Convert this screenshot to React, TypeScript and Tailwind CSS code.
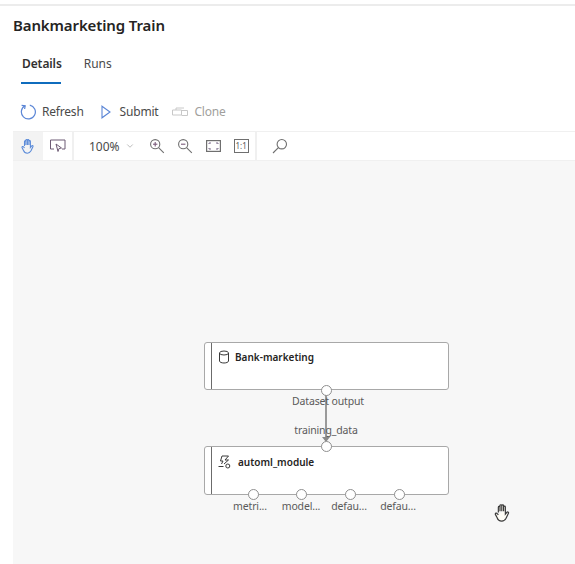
import { ChevronDown } from "lucide-react";

const font = { fontFamily: '"Noto Sans", sans-serif' };

function Port({ left, top }: { left: number; top: number }) {
  // ports sit over the node border
  return (
    <div
      className="absolute w-[11px] h-[11px] rounded-full bg-white border border-[#8f8f8f]"
      style={{ left, top }}
    />
  );
}

function Label({ left, top, children }: { left: number; top: number; children: string }) {
  return (
    <span
      className="absolute -translate-x-1/2 text-[10.5px] tracking-[-0.15px] leading-[14px] text-[#5a5a5a] whitespace-nowrap"
      style={{ left, top }}
    >
      {children}
    </span>
  );
}

function HandIcon({ stroke = "#5b8bd9" }: { stroke?: string }) {
  return (
    <svg width="14" height="16" viewBox="0 0 14 16" fill="none" stroke={stroke} strokeWidth="1.1">
      <path d="M3.5 8V3.6c0-1 1.4-1 1.4 0V7M4.9 7V2.2c0-1 1.5-1 1.5 0V7M6.4 7V2.4c0-1 1.5-1 1.500 0V7M7.900 7V3.400c0-1 1.500-1 1.500 0v6l1.300-1.600c.8-.7 1.800.1 1.200 1L10 12.800c-.9 1.600-2 2.400-3.600 2.400-2 0-3.300-1-3.900-2.800L1 9.600c-.3-1 1-1.600 1.600-.7L3.500 10" />
    </svg>
  );
}

function ZoomIcon({ sign }: { sign: "plus" | "minus" }) {
  return (
    <svg width="16" height="16" viewBox="0 0 16 16" fill="none" stroke="#6f6f6f" strokeWidth="1.1">
      <circle cx="6.2" cy="6.2" r="4.6" />
      <path d="M9.6 9.6l5.2 5.2" />
      <path d="M4 6.2h4.4" stroke="#7a5a7a" />
      {sign === "plus" && <path d="M6.2 4v4.4" stroke="#7a5a7a" />}
    </svg>
  );
}

export default function App() {
  return (
    <div className="w-[575px] h-[564px] overflow-hidden bg-white flex flex-col" style={font}>
      <div className="mt-[4px] h-[2px] bg-[#ececec]" />

      <h1 className="ml-[13px] mt-[8px] text-[15px] tracking-[-0.12px] leading-[22px] font-semibold text-[#252423]">
        Bankmarketing Train
      </h1>

      {/* tabs */}
      <div className="mt-[20px] ml-[21px] flex gap-[21px] text-[12px] leading-[16px]">
        <div className="flex flex-col">
          <span className="px-[1px] font-semibold tracking-[-0.1px] text-[#323130]">Details</span>
          <div className="mt-[10px] h-[2px] w-[40px] bg-[#0f6cbd]" />
        </div>
        <span className="text-[#4a4a4a]">Runs</span>
      </div>

      {/* command bar */}
      <div className="mt-[20px] ml-[20px] flex items-center h-[16px] text-[12px] tracking-[-0.2px] text-[#4a4a4a]">
        <svg width="16" height="16" viewBox="0 0 16 16" fill="none" stroke="#5b86d6" strokeWidth="1.2">
          <path d="M5 1.8A7 7 0 1 0 9.8 1.1" />
          <path d="M1.6 1.4L5.2 1.8L4.6 5" />
        </svg>
        <span className="ml-[6px]">Refresh</span>
        <svg className="ml-[17px]" width="10" height="14" viewBox="0 0 10 14" fill="none" stroke="#5b86d6" strokeWidth="1.1">
          <path d="M1 1.2L9 7L1 12.8Z" />
        </svg>
        <span className="ml-[9px]">Submit</span>
        <svg className="ml-[14px]" width="16" height="10" viewBox="0 0 16 10" fill="none" stroke="#c8c8c8" strokeWidth="1">
          <path d="M4 3V1h8M.5 3h9v5h-9zM9.500 3.500H15.500V8.500H9.500" />
        </svg>
        <span className="ml-[6px] text-[#a19f9d]">Clone</span>
      </div>

      {/* graph area */}
      <div className="mt-[11px] ml-[13px] flex-1 flex flex-col min-h-0">
        <div className="h-[30px] bg-white border-y border-[#f0f0f0] flex items-stretch">
          <div className="w-[30px] bg-[#f3f3f3] flex items-center justify-center">
            <HandIcon />
          </div>
          <div className="w-[29px] flex items-center justify-center">
            <svg width="16" height="14" viewBox="0 0 16 14" fill="none" stroke="#6d5a74" strokeWidth="1">
              <path d="M4 10H.5V1h14.500v9h-3" />
              <path d="M6 5l5.500 4-2.500.5-1 3z" />
            </svg>
          </div>
          <div className="w-[2px] bg-[#f0f0f0]" />
          <div className="ml-[15px] pt-[1px] flex items-center text-[12px] text-[#4a4a4a]">100%</div>
          <div className="ml-[5px] flex items-center">
            <ChevronDown size={10} color="#b0b0b0" />
          </div>
          <div className="ml-[14px] flex items-center">
            <ZoomIcon sign="plus" />
          </div>
          <div className="ml-[12px] flex items-center">
            <ZoomIcon sign="minus" />
          </div>
          <div className="ml-[13px] flex items-center">
            <svg width="15" height="12" viewBox="0 0 15 12" fill="none" strokeWidth="1.2">
              <rect x=".6" y=".6" width="13.800" height="10.800" stroke="#6f6f6f" />
              <path d="M3 4V3h2M10 3h2v1M3 8v1h2M10 9h2V8" stroke="#7a6a8a" strokeWidth="1" />
            </svg>
          </div>
          <div className="ml-[13px] flex items-center">
            <div className="w-[15px] h-[14px] border border-[#6f6f6f] flex items-center justify-center text-[8px] leading-none text-[#5a5a5a]">
              1:1
            </div>
          </div>
          <div className="ml-[6px] w-[2px] bg-[#f0f0f0]" />
          <div className="ml-[15px] flex items-center">
            <svg width="16" height="16" viewBox="0 0 16 16" fill="none" stroke="#6f6f6f" strokeWidth="1.1">
              <circle cx="9.800" cy="6.200" r="4.700" />
              <path d="M6.400 9.600L1 15" />
            </svg>
          </div>
        </div>

        {/* canvas */}
        <div className="relative flex-1 bg-[#f7f7f7]">
          <div className="absolute left-[312px] top-[234px] w-[2px] h-[46px] bg-[#9a9a9a]" />
          <div className="absolute left-[309px] top-[276px] w-0 h-0 border-x-[4px] border-x-transparent border-t-[5px] border-t-[#8a8a8a]" />

          <div className="absolute left-[191px] top-[181px] w-[245px] h-[48px] bg-white rounded-[3px] border border-[#a8a8a8] flex">
            <div className="w-[7px] border-r border-[#6b6b6b]" />
            <div className="ml-[6px] mt-[7px] flex items-start">
              <svg width="12" height="14" viewBox="0 0 12 14" fill="none" stroke="#3a3a3a" strokeWidth="1">
                <ellipse cx="6" cy="3" rx="4.500" ry="2" />
                <path d="M1.500 3v8c0 1.100 2 2 4.500 2s4.500-.9 4.500-2V3" />
              </svg>
              <span className="ml-[5px] text-[10px] leading-[14px] font-semibold text-[#252423]">Bank-marketing</span>
            </div>
          </div>

          <div className="absolute left-[191px] top-[285px] w-[245px] h-[49px] bg-white rounded-[3px] border border-[#a8a8a8] flex">
            <div className="w-[7px] border-r border-[#6b6b6b]" />
            <div className="ml-[6px] mt-[8px] flex items-start">
              <svg width="13" height="14" viewBox="0 0 13 14" fill="none" stroke="#3a3a3a" strokeWidth="1">
                <path d="M4 1h6.500L7 5h3.500L6 9" />
                <path d="M4 1L2.500 6H5L3.500 9" />
                <path d="M.5 11.500h5" />
                <circle cx="9.800" cy="11" r="2" />
              </svg>
              <span className="ml-[7px] text-[10px] leading-[14px] font-semibold text-[#252423]">automl_module</span>
            </div>
          </div>

          <Port left={308} top={224} />
          <Port left={308} top={280} />
          <Port left={235} top={328} />
          <Port left={283} top={328} />
          <Port left={332} top={328} />
          <Port left={381} top={328} />

          <Label left={315} top={233}>Dataset output</Label>
          <Label left={313} top={262}>training_data</Label>
          <Label left={237} top={338}>metri...</Label>
          <Label left={288} top={338}>model...</Label>
          <Label left={336} top={338}>defau...</Label>
          <Label left={385} top={338}>defau...</Label>

          {/* mouse pointer left in the capture */}
          <svg className="absolute left-[481px] top-[342px]" width="17" height="19" viewBox="0 0 14 16" fill="#fffdf6" stroke="#3a3a3a" strokeWidth="1">
            <path d="M3.500 8V3.600c0-1 1.400-1 1.400 0V7M4.900 7V2.200c0-1 1.500-1 1.500 0V7M6.400 7V2.400c0-1 1.500-1 1.500 0V7M7.900 7V3.400c0-1 1.500-1 1.500 0v6l1.300-1.600c.8-.7 1.800.1 1.200 1L10 12.800c-.9 1.600-2 2.400-3.600 2.400-2 0-3.300-1-3.900-2.800L1 9.600c-.3-1 1-1.600 1.600-.7L3.500 10" />
          </svg>
        </div>
      </div>
    </div>
  );
}
